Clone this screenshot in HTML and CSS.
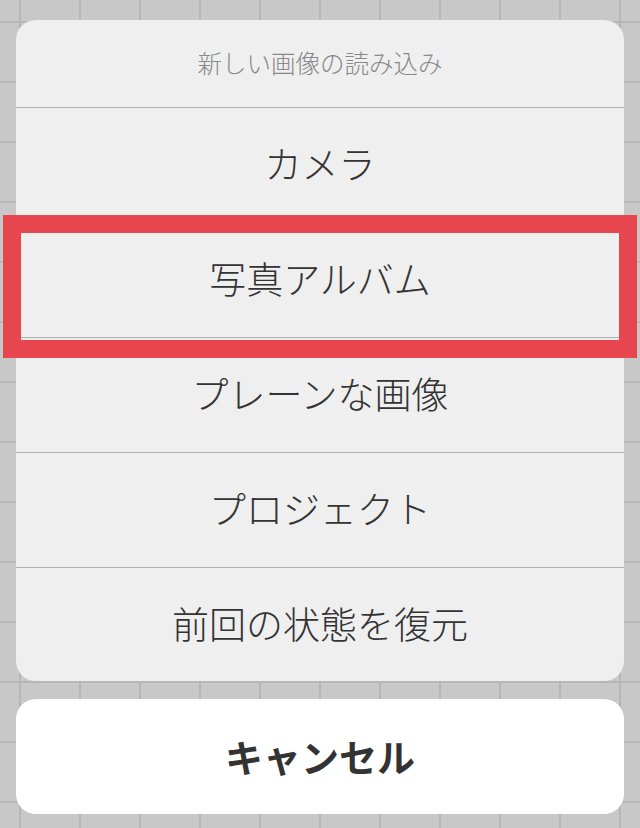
FILE: index.html
```html
<!DOCTYPE html>
<html lang="ja">
<head>
    <meta charset="UTF-8">
    <meta name="viewport" content="width=device-width, initial-scale=1.0">
    <title>新しい画像の読み込み</title>
    <link rel="stylesheet" href="styles.css">
</head>
<body>

<div class="screen">
    <div class="sheet-wrap">
        <div class="sheet">
            <div class="sheet-title">新しい画像の読み込み</div>
            <div class="sheet-item">カメラ</div>
            <div class="sheet-item">写真アルバム</div>
            <div class="sheet-item">プレーンな画像</div>
            <div class="sheet-item">プロジェクト</div>
            <div class="sheet-item">前回の状態を復元</div>
        </div>
        <!-- highlight around the photo album row -->
        <div class="highlight"></div>
    </div>

    <div class="cancel">キャンセル</div>
</div>

</body>
</html>
```

FILE: styles.css
```css
body {
    margin: 0;
    padding: 0;
    font-family: "Noto Sans CJK JP", "Noto Sans", sans-serif;
    background-color: #c8c8c8;
    background-image:
        linear-gradient(to right, #b6b6b6 2px, transparent 2px),
        linear-gradient(to bottom, #b6b6b6 2px, transparent 2px);
    background-size: 60px 60px;
    background-position: 19px 21px;
    height: 828px;
    overflow: hidden;
}

.screen {
    display: flex;
    flex-direction: column;
    gap: 18px;
    padding: 20px 16px 0;
}

.sheet-wrap {
    position: relative;
}

.sheet {
    display: flex;
    flex-direction: column;
    background-color: #efefef;
    border-radius: 20px;
    overflow: hidden;
}

.sheet-title {
    height: 87px;
    display: flex;
    align-items: center;
    justify-content: center;
    font-size: 24.5px;
    font-weight: 300;
    color: #888;
    padding-bottom: 2px;
    box-sizing: border-box;
}

.sheet-item {
    height: 115px;
    display: flex;
    align-items: center;
    justify-content: center;
    border-top: 1px solid #b2b2b2;
    font-size: 37px;
    font-weight: 300;
    color: #333;
    padding-bottom: 4px;
    box-sizing: border-box;
}

.sheet-item:last-child {
    height: 114px;
}

.highlight {
    position: absolute;
    left: -13px;
    top: 195px;
    width: 634px;
    height: 143px;
    border: 18px solid #e8464e;
    box-sizing: border-box;
}

.cancel {
    height: 115px;
    display: flex;
    align-items: center;
    justify-content: center;
    background-color: #fff;
    border-radius: 20px;
    font-size: 38px;
    font-weight: bold;
    color: #333;
    padding-bottom: 3px;
    box-sizing: border-box;
}
```
